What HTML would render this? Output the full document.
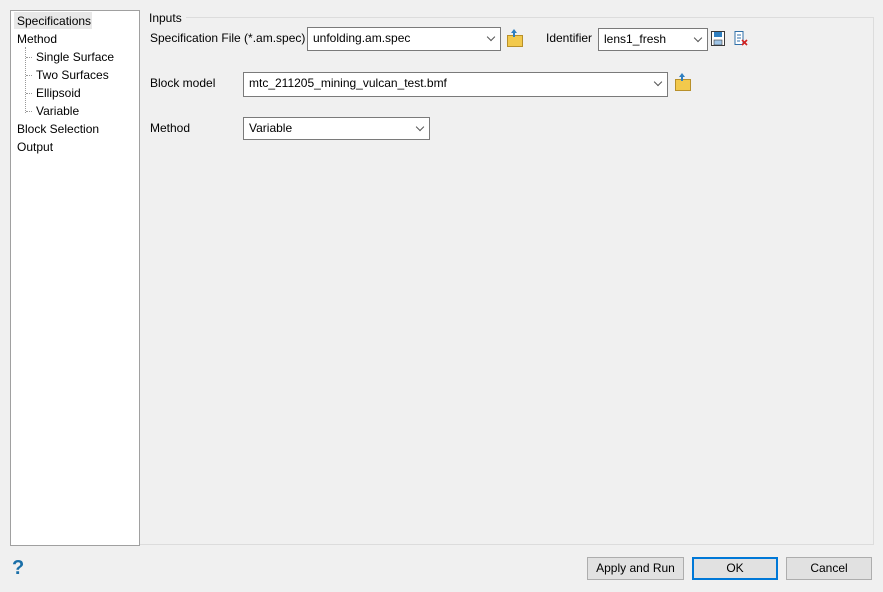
<!DOCTYPE html><html><head><style>
body{margin:0;width:883px;height:592px;background:#f0f0f0;font-family:"Liberation Sans",sans-serif;font-size:12px;color:#000;position:relative;overflow:hidden}
.a{position:absolute}
.tree{left:10px;top:10px;width:128px;height:534px;background:#fff;border:1px solid #a0a0a0}
.combo{position:absolute;background:#fff;border:1px solid #7a7a7a;box-sizing:border-box;padding-left:5px;line-height:20px}
.combo:after{content:"";position:absolute;right:6px;top:6px;width:5px;height:5px;border-right:1px solid #555;border-bottom:1px solid #555;transform:rotate(45deg)}
.btn{position:absolute;top:557px;height:23px;background:#e1e1e1;border:1px solid #adadad;box-sizing:border-box;text-align:center;line-height:21px}
.fold{position:absolute;width:14px;height:10px;background:#f2c94c;border:1px solid #b8902a}
.fold:before{content:"";position:absolute;left:3px;top:-7px;width:0;height:0;border-left:3px solid transparent;border-right:3px solid transparent;border-bottom:4px solid #2f7fc0}
.fold:after{content:"";position:absolute;left:5px;top:-3px;width:2px;height:4px;background:#2f7fc0}
.dot{position:absolute;border-left:1px dotted #999}
.h{position:absolute;border-top:1px dotted #999;width:6px}
</style></head><body>
<div class="a tree"></div>
<div class="a" style="left:14px;top:12px;width:78px;height:17px;background:#e8e8e8"></div>
<div class="a" style="left:17px;top:14px">Specifications</div>
<div class="a" style="left:17px;top:32px">Method</div>
<div class="dot" style="left:25px;top:47px;height:66px"></div>
<div class="h" style="left:26px;top:57px"></div><div class="h" style="left:26px;top:75px"></div><div class="h" style="left:26px;top:93px"></div><div class="h" style="left:26px;top:111px"></div>
<div class="a" style="left:36px;top:50px">Single Surface</div>
<div class="a" style="left:36px;top:68px">Two Surfaces</div>
<div class="a" style="left:36px;top:86px">Ellipsoid</div>
<div class="a" style="left:36px;top:104px">Variable</div>
<div class="a" style="left:17px;top:122px">Block Selection</div>
<div class="a" style="left:17px;top:140px">Output</div>
<div class="a" style="left:140px;top:544px;width:733px;border-top:1px solid #dcdcdc"></div>
<div class="a" style="left:873px;top:17px;height:528px;border-left:1px solid #dcdcdc"></div>
<div class="a" style="left:186px;top:17px;width:687px;border-top:1px solid #dcdcdc"></div>
<div class="a" style="left:149px;top:11px">Inputs</div>
<div class="a" style="left:150px;top:31px">Specification File (*.am.spec)</div>
<div class="combo" style="left:307px;top:27px;width:194px;height:24px">unfolding.am.spec</div>
<div class="fold" style="left:507px;top:35px"></div>
<div class="a" style="left:546px;top:31px">Identifier</div>
<div class="combo" style="left:598px;top:28px;width:110px;height:23px">lens1_fresh</div>
<svg class="a" style="left:711px;top:31px" width="15" height="16" viewBox="0 0 15 16"><rect x="0.5" y="0.5" width="13" height="14" fill="#fff" stroke="#3a3a3a"/><rect x="3" y="1" width="8" height="5" fill="#2f7fc0"/><rect x="3" y="9" width="8" height="5" fill="#9ec4e6" stroke="#3a3a3a" stroke-width=".6"/></svg>
<svg class="a" style="left:734px;top:31px" width="15" height="16" viewBox="0 0 15 16"><rect x="1" y="0.5" width="8" height="13" fill="#fff" stroke="#2f6fa8"/><path d="M3 4h4M3 7h4M3 10h3" stroke="#2f6fa8"/><path d="M8 9l5 5M13 9l-5 5" stroke="#d02020" stroke-width="1.6"/></svg>
<div class="a" style="left:150px;top:76px">Block model</div>
<div class="combo" style="left:243px;top:72px;width:425px;height:25px;line-height:21px">mtc_211205_mining_vulcan_test.bmf</div>
<div class="fold" style="left:675px;top:79px"></div>
<div class="a" style="left:150px;top:121px">Method</div>
<div class="combo" style="left:243px;top:117px;width:187px;height:23px">Variable</div>
<div class="a" style="left:12px;top:557px;font-size:20px;font-weight:bold;color:#1a6fa8">?</div>
<div class="btn" style="left:587px;width:97px">Apply and Run</div>
<div class="btn" style="left:692px;width:86px;border:2px solid #0078d7;line-height:19px">OK</div>
<div class="btn" style="left:786px;width:86px">Cancel</div>
</body></html>
